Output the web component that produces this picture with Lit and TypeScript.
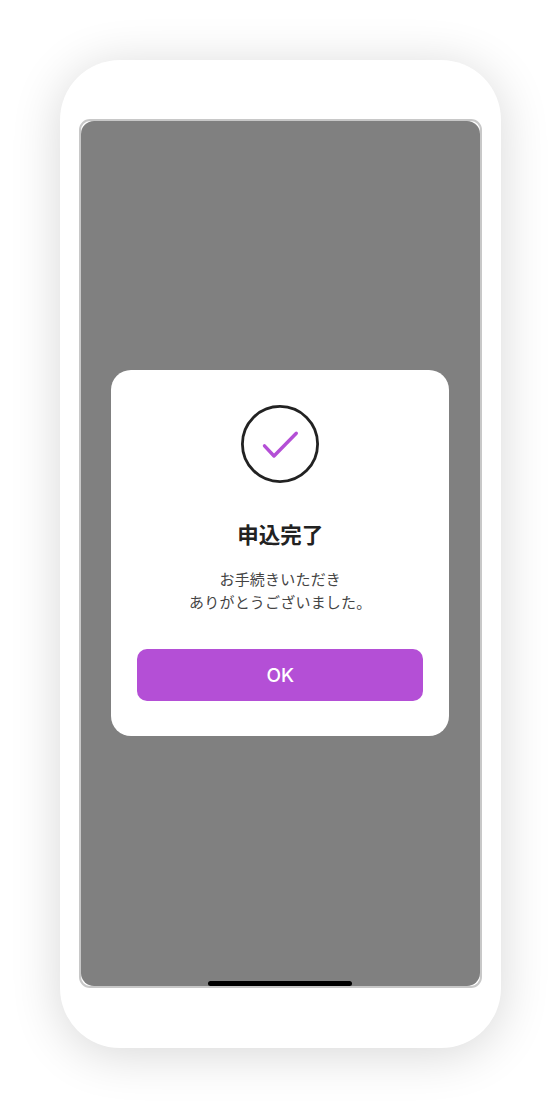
import { LitElement, html, css } from "lit";
import { customElement } from "lit/decorators.js";

@customElement("app-root")
export class AppRoot extends LitElement {
  static styles = css`
    :host {
      display: block;
      width: 560px;
      height: 1108px;
      background: #fff;
      overflow: hidden;
      font-family: "Inter", "Noto Sans CJK JP", sans-serif;
    }
    .page {
      height: 1108px;
      box-sizing: border-box;
      padding: 60px 59px 60px 60px;
    }
    .phone {
      height: 988px;
      box-sizing: border-box;
      padding: 59px 19.5px 59px 19px;
      background: #fff;
      border-radius: 60px;
      box-shadow: 0 6px 50px rgba(0, 0, 0, 0.16);
    }
    .screen {
      position: relative;
      height: 869px;
      box-sizing: border-box;
      border: 2px solid #c8c8c8;
      border-radius: 11px;
      background: #fff;
      display: flex;
      align-items: center;
      justify-content: center;
      padding: 0 0 1px;
    }
    .scrim {
      position: absolute;
      inset: 0;
      border-radius: 13px;
      background: #808080;
    }
    .modal {
      position: relative;
      width: 338px;
      height: 366px;
      box-sizing: border-box;
      background: #fff;
      border-radius: 20px;
      padding: 35px 26px 0;
      display: flex;
      flex-direction: column;
      align-items: center;
    }
    .icon {
      display: block;
      width: 78px;
      height: 78px;
      flex: none;
    }
    h1 {
      margin: 38px 0 0;
      font-size: 21.5px;
      line-height: 28px;
      font-weight: 700;
      color: #222;
    }
    p {
      margin: 19px 0 0;
      font-size: 15px;
      line-height: 23px;
      font-weight: 400;
      letter-spacing: 0.2px;
      color: #444;
      text-align: center;
    }
    button {
      margin-top: 35px;
      width: 286px;
      height: 52px;
      flex: none;
      border: 0;
      border-radius: 10px;
      background: #b44fd6;
      color: #fff;
      font: 500 19px "Inter", sans-serif;
      padding: 0;
    }
    .home {
      position: absolute;
      left: 127px;
      bottom: 0;
      width: 144px;
      height: 5px;
      border-radius: 3px;
      background: #000;
    }
  `;

  render() {
    return html`
      <div class="page">
        <div class="phone">
          <div class="screen">
            <div class="scrim"></div>
            <div class="modal">
              <svg class="icon" viewBox="0 0 78 78" fill="none" aria-hidden="true">
                <circle cx="39" cy="39" r="37.6" stroke="#222" stroke-width="2.8"></circle>
                <path d="M23.5 40.8 L33 51 L55.3 28.3" stroke="#b44fd6" stroke-width="3.4" stroke-linecap="round" stroke-linejoin="round"></path>
              </svg>
              <h1>申込完了</h1>
              <p>お手続きいただき<br />ありがとうございました。</p>
              <button>OK</button>
            </div>
            <div class="home"></div>
          </div>
        </div>
      </div>
    `;
  }
}
